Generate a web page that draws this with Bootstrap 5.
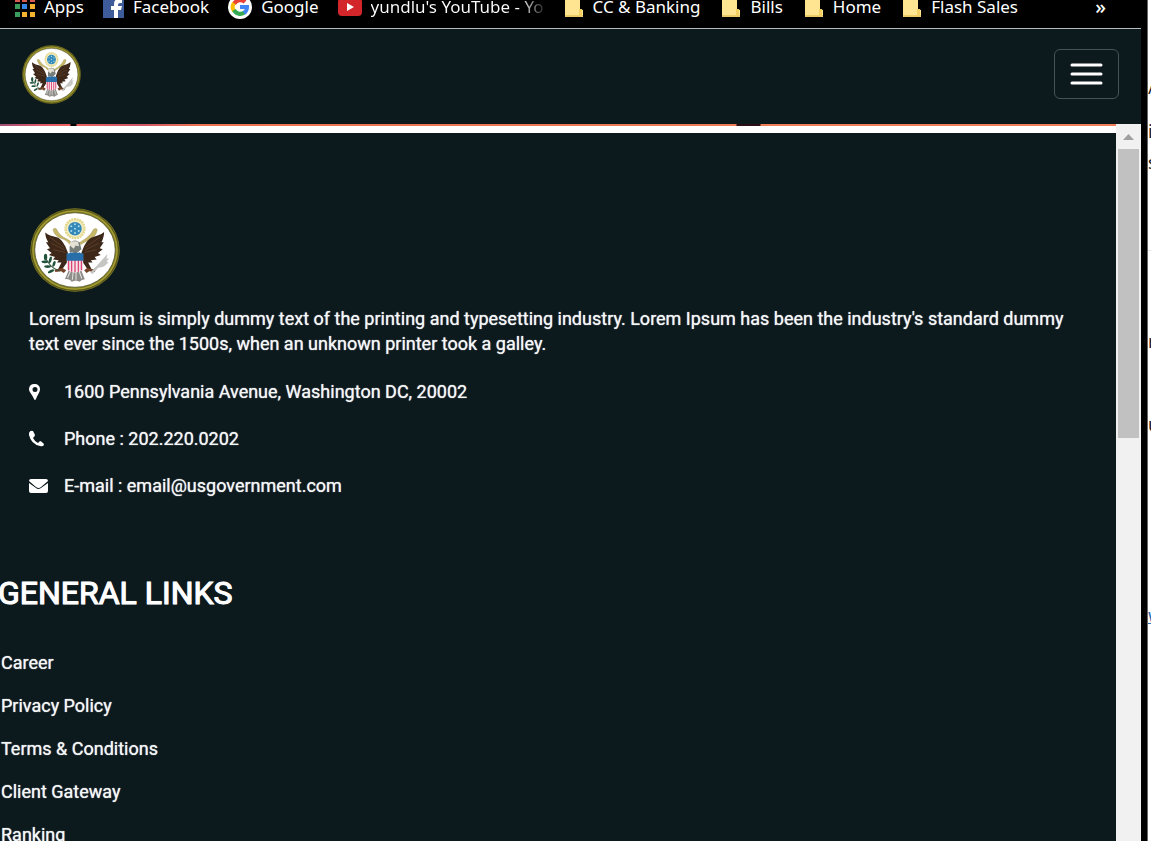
<!DOCTYPE html>
<html lang="en">
<head>
<meta charset="utf-8">
<meta name="viewport" content="width=device-width, initial-scale=1">
<title>US Government</title>
<link href="https://cdn.jsdelivr.net/npm/bootstrap@5.3.0/dist/css/bootstrap.min.css" rel="stylesheet">
<style>
  body { font-family: Roboto, "Liberation Sans", sans-serif; font-size: 18px; line-height: 25px; color: #f5f7f7; background: #fff; }
  a { color: inherit; text-decoration: none; }
  main { text-shadow: 0 0 1px #dfe4e4; }
  .browser { background: #0c191d; border-right: 6px solid #000; min-width: 0; }
  .bookmarks { background: #000; height: 29px; border-bottom: 1px solid #b4bcbe; padding: 0 35px 0 15px; font-family: "Noto Sans", sans-serif; font-size: 17px; line-height: 14px; color: #fff; gap: 19px; white-space: nowrap; }
  .bookmarks a { display: flex; gap: 9px; height: 14px; align-items: center; }
  .bookmarks svg { flex: none; }
  .folders { gap: 22px; padding-left: 2px; }
  .folders a { gap: 10px; }
  .fade-label { background: linear-gradient(90deg, #fff 86%, #222 100%); -webkit-background-clip: text; background-clip: text; color: transparent; line-height: 22px; }
  .more-link { font-size: 20px; font-weight: 500; }
  .site-bar { height: 95px; padding: 0 22px 5px; }
  .menu-btn { width: 65px; height: 50px; border: 1px solid #465256; border-radius: 6px; padding: 0; }
  .hero-edge { height: 9px; border-bottom: 7px solid #fff; background: linear-gradient(90deg, #9c4f78 0, #e0586a 40px, #f0625e 70px, #000 71px 76px, #e9605f 77px, #cf5668 140px, #ee7353 200px, #ef7a53 736px, #2a0d16 737px 760px, #ef7d55 761px); }
  .about { padding: 75px 30px 0 29px; }
  .about p { margin: 14px 0 23px; }
  .contact-list { display: grid; gap: 22px; }
  .contact-list svg { width: 20px; height: 20px; flex: none; }
  .contact-list li { display: flex; align-items: center; gap: 15px; }
  h2 { font-size: 32px; line-height: 40px; font-weight: 400; margin: 75px 0 37px -2px; -webkit-text-stroke: 1px #fff; color: #fff; }
  .site-links { display: grid; gap: 18px; padding-left: 1px; }
  .scroll { width: 25px; background: #f1f1f1; padding: 0 2px; }
  .scroll-up { height: 25px; }
  .thumb { height: 289px; background: #c1c1c1; }
  .backdrop { width: 4px; border-left: 1px solid #666; font-family: "Noto Sans", sans-serif; font-size: 18px; line-height: 20px; color: #222; display: grid; grid-template-rows: 97px 44px 31px 79px 100px 83px 191px; align-items: end; align-content: start; overflow: hidden; text-shadow: none; }
  .backdrop hr { margin: 0; color: #999; }
  .backdrop a { color: #2a6eb5; text-decoration: underline; }
</style>
</head>
<body>
<svg class="d-none">
  <symbol id="seal" viewBox="33 26 266 248" preserveAspectRatio="none">
    <ellipse cx="166" cy="150" rx="132" ry="123" fill="#827d23"/>
    <ellipse cx="166" cy="150" rx="129" ry="120" fill="none" stroke="#3b3d14" stroke-width="2"/>
    <ellipse cx="166" cy="150" rx="124" ry="115" fill="none" stroke="#aaa33a" stroke-width="3"/>
    <ellipse cx="166" cy="150" rx="119" ry="110" fill="#fff" stroke="#44451a" stroke-width="2"/>
    <circle cx="166" cy="87" r="28" fill="#f3edc2" stroke="#e2d68a" stroke-width="7" stroke-dasharray="6 2"/>
    <circle cx="166" cy="87" r="20" fill="#3388b8"/>
    <g fill="#a9d8ea"><circle cx="166" cy="74" r="3"/><circle cx="155" cy="80" r="3"/><circle cx="177" cy="80" r="3"/><circle cx="166" cy="87" r="3"/><circle cx="155" cy="94" r="3"/><circle cx="177" cy="94" r="3"/><circle cx="166" cy="100" r="3"/></g>
    <path d="M101 90q3-7 10-2 10 21 30 29 10 5 16 12l-7 4q-10-14-24-17-20-6-25-26zM232 90q-4-7-11-1-8 17-22 26-12 8-21 14l5 5q11-8 24-13 20-8 25-31z" fill="#c6b769" stroke="#857b3a" stroke-width="1"/>
    <path d="M78 98c10 9 24 11 34 14 13 4 18 15 25 26l8 20-3 30-16 22-10-3 10-20-13 0 5-7-17-2 6-7-18-6 8-6-14-11 9-3-12-18 7 0c-5-8-9-19-9-29zM252 97c-10 9-24 11-34 15-13 4-18 15-25 26l-8 20 5 30 15 22 10-3-10-20 13 0-5-7 17-2-6-7 18-6-8-6 14-11-9-3 12-18-7 0c5-8 8-20 8-30z" fill="#3d2719"/>
    <path d="M91 112l42 30M96 130l40 20M102 149l35 8M239 112l-42 30M236 130l-40 20M230 149l-35 8" stroke="#6b4a30" stroke-width="2"/>
    <path d="M150 144l2-16q14-12 28 0l5 20-15 12-20-4z" fill="#777d78"/>
    <path d="M151 137q-4-12 9-13l15 1 3 14-10-2-6 9z" fill="#e5e2d5"/>
    <path d="M150 204l-14 32q14-2 20 8l12-4 12 4q5-8 15-8l-13-32z" fill="#8f8d89"/>
    <path d="M153 212l-9 20m17-20l-3 26m11-26v26m9-26l8 22" stroke="#e4e4e4" stroke-width="3"/>
    <path d="M142 174h48v34q-10 7-24 9-14-2-24-9z" fill="#f6e6ea"/>
    <path d="M147 174v36m9-36v40m10-40v42m10-42v40m9-40v36" stroke="#dc4674" stroke-width="4"/>
    <path d="M141 160q6 2 12-3 6 4 13 0 7 4 13 0 7 5 12 3v22h-50z" fill="#286ea8"/>
    <path d="M105 208l24-5 11 7-7 8-8-5-17 2zM226 208l-24-5-9 7 7 8 8-5 17 2z" fill="#74442a"/>
    <path d="M76 165q12 36 44 47" fill="none" stroke="#385438" stroke-width="3"/>
    <g fill="#20533a"><ellipse cx="79" cy="171" rx="5" ry="10"/><ellipse cx="77" cy="185" rx="10" ry="4"/><ellipse cx="85" cy="199" rx="10" ry="4"/><ellipse cx="95" cy="213" rx="10" ry="4" transform="rotate(-25 95 213)"/><ellipse cx="93" cy="179" rx="4" ry="10" transform="rotate(15 93 179)"/><ellipse cx="104" cy="191" rx="4" ry="9" transform="rotate(20 104 191)"/></g>
    <path d="M212 216l20-20 29-32-4 14 8-3-8 12 7 0-13 11-17 4-16 18z" fill="#c6c6c2" stroke="#a6a6a0" stroke-width="1"/>
  </symbol>
  <symbol id="folder" viewBox="0 0 18 20"><path d="M0 0h15v12l3 1v7H0z" fill="#ffe592"/><path d="M14 18v-6h3v6z" fill="#f2cf63"/><path d="M0 19h18" stroke="#d8b23f"/></symbol>
</svg>
<div class="d-flex vh-100 overflow-hidden">
  <div class="browser d-flex flex-column flex-grow-1">
    <nav class="bookmarks d-flex overflow-hidden flex-shrink-0" aria-label="Bookmarks">
      <a href="#"><svg width="20" height="20" viewBox="0 0 20 20"><path d="M0 0h5v5H0zM7 0h5v5H7zM15 0h5v5h-5z" fill="#d85b50"/><path d="M0 7h5v5H0z" fill="#3b9d5c"/><path d="M7 7h5v5H7z" fill="#3686e8"/><path d="M15 7h5v5h-5zM7 15h5v5H7zM15 15h5v5h-5z" fill="#f5b32f"/><path d="M0 15h5v5H0z" fill="#3b9d5c"/></svg>Apps</a>
      <a href="#"><svg width="21" height="21" viewBox="0 0 21 21"><path d="M0 0h21v21H0z" fill="#3e5b9a"/><path d="M11 21v-8H8V9h3V7q0-5 5-5h3v4h-2q-2 0-2 2v1h4l-1 4h-3v8z" fill="#fff"/></svg>Facebook</a>
      <a href="#"><svg width="24" height="24" viewBox="0 0 24 24"><circle cx="12" cy="12" r="12" fill="#fff"/><g fill="none" stroke-width="4"><path d="M17 7A7 7 0 0 0 6 9" stroke="#ea4335"/><path d="M6 8A7 7 0 0 0 6 16" stroke="#fbbc05"/><path d="M6 15A7 7 0 0 0 17 17" stroke="#34a853"/><path d="M12 12h7q0 4-3 6" stroke="#4285f4"/></g></svg>Google</a>
      <a href="#"><svg width="24" height="18" viewBox="0 0 24 18"><rect width="24" height="18" rx="4" fill="#d2262b"/><path d="M9 5l7 4-7 4z" fill="#fff"/></svg><span class="fade-label">yundlu's YouTube - Yo</span></a>
      <div class="folders d-flex">
        <a href="#"><svg width="18" height="20"><use href="#folder"/></svg>CC &amp; Banking</a>
        <a href="#"><svg width="18" height="20"><use href="#folder"/></svg>Bills</a>
        <a href="#"><svg width="18" height="20"><use href="#folder"/></svg>Home</a>
        <a href="#"><svg width="18" height="20"><use href="#folder"/></svg>Flash Sales</a>
      </div>
      <a href="#" class="more-link ms-auto" aria-label="More bookmarks">»</a>
    </nav>
    <header class="site-bar d-flex align-items-center justify-content-between flex-shrink-0">
      <a href="#" aria-label="Home"><svg class="d-block" width="59" height="59"><use href="#seal"/></svg></a>
      <button class="menu-btn btn" type="button" aria-label="Menu"><svg class="d-block mx-auto" width="33" height="22" viewBox="0 0 33 22" stroke="#fff" stroke-width="3" stroke-linecap="round"><path d="M2 2h29M2 11h29M2 20h29"/></svg></button>
    </header>
    <div class="d-flex flex-grow-1 overflow-hidden">
      <main class="flex-grow-1">
        <div class="hero-edge"></div>
        <section class="about">
          <svg class="d-block ms-0" width="91" height="84" viewBox="0 0 91 84"><use href="#seal" x="1" width="90" height="84"/></svg>
          <p>Lorem Ipsum is simply dummy text of the printing and typesetting industry. Lorem Ipsum has been the industry's standard dummy text ever since the 1500s, when an unknown printer took a galley.</p>
          <ul class="contact-list list-unstyled mb-0">
            <li><svg viewBox="0 0 20 20"><path fill="#fff" fill-rule="evenodd" d="M6 2a5 5 0 0 1 5 5c0 3-2 5-4 10q-1 2-2 0C3 12 0 10 0 7a5 5 0 0 1 6-5zM6 5a2 2 0 1 0 0 5 2 2 0 0 0 0-5z"/></svg>1600 Pennsylvania Avenue, Washington DC, 20002</li>
            <li><svg viewBox="0 0 20 20"><path fill="#fff" d="M0 4q1-3 4-2l2 4q0 1-2 3 2 4 5 5l2-2q1 0 4 3 0 3-4 2Q2 15 0 6z"/></svg>Phone : 202.220.0202</li>
            <li><svg viewBox="0 0 20 20"><path fill="#fff" d="M0 5q0-2 2-2h15q2 0 2 2l-7 6q-2 2-5 0zM0 7l7 5q2 2 5 0l7-5v8q0 2-2 2H2q-2 0-2-2z"/></svg>E-mail : email@usgovernment.com</li>
          </ul>
        </section>
        <h2>GENERAL LINKS</h2>
        <ul class="site-links list-unstyled">
          <li><a href="#">Career</a></li>
          <li><a href="#">Privacy Policy</a></li>
          <li><a href="#">Terms &amp; Conditions</a></li>
          <li><a href="#">Client Gateway</a></li>
          <li><a href="#">Ranking</a></li>
        </ul>
      </main>
      <div class="scroll flex-shrink-0" aria-hidden="true">
        <div class="scroll-up d-flex justify-content-center align-items-center"><svg width="11" height="6" viewBox="0 0 22 12"><path d="M0 12L11 0l11 12z" fill="#a0a0a0"/></svg></div>
        <div class="thumb"></div>
      </div>
    </div>
  </div>
  <div class="backdrop flex-shrink-0">
    <span>/</span><span>i</span><span>s</span><hr><span>r</span><span>u</span><a href="#">w</a>
  </div>
</div>
<script src="https://cdn.jsdelivr.net/npm/bootstrap@5.3.0/dist/js/bootstrap.bundle.min.js"></script>
</body>
</html>
